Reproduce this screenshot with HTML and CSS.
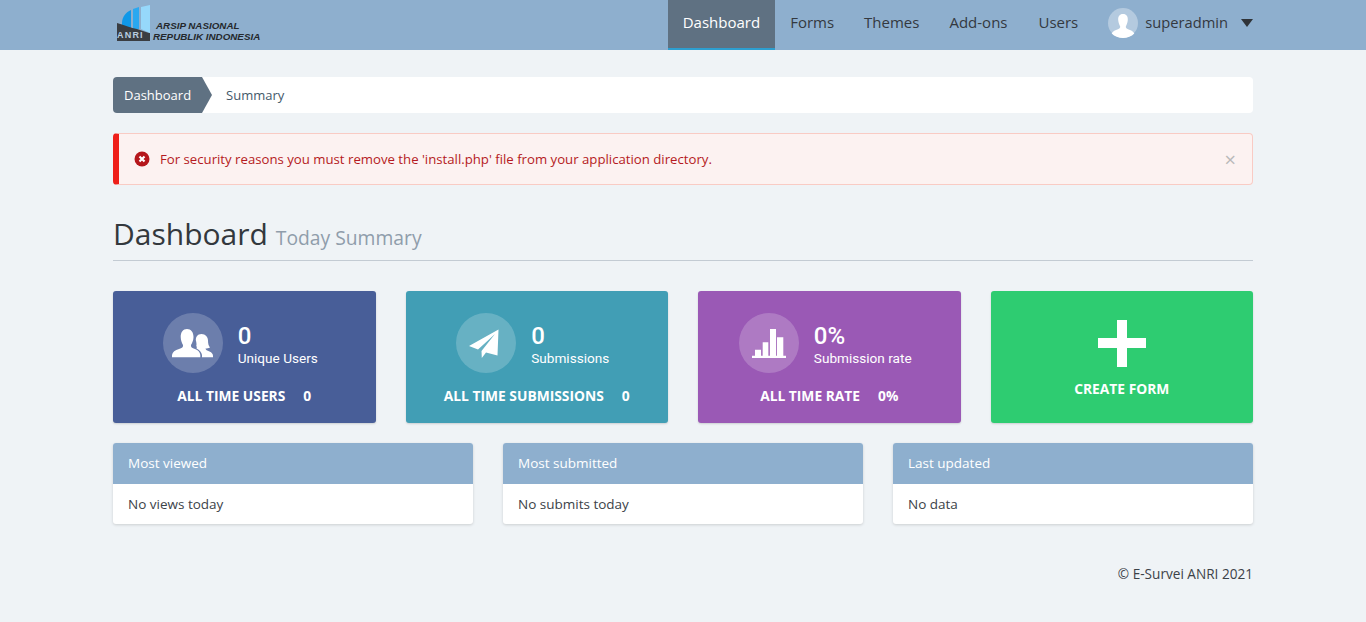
FILE: index.html
```html
<!DOCTYPE html>
<html lang="en">
<head>
    <meta charset="UTF-8">
    <meta name="viewport" content="width=device-width, initial-scale=1.0">
    <title>Dashboard</title>
    <link rel="stylesheet" href="styles.css">
</head>
<body>
    <header class="navbar">
        <div class="wrap navbar-inner">
            <a class="brand" href="#">
                <svg class="brand-mark" width="36" height="38" viewBox="0 0 36 38">
                    <path d="M5 19C5 13 9 8 14 6V25L5 21Z" fill="#1098e8"/>
                    <path d="M16 5L22 3V25L16 25Z" fill="#2aa8f0"/>
                    <path d="M24 3L33 1V29L24 25Z" fill="#96d8fb"/>
                    <path d="M0 19C8 21 14 24 20 25L32 29H33V37H0Z" fill="#3a3d42"/>
                </svg>
                <span class="brand-anri">ANRI</span>
                <span class="brand-text">
                    <span class="brand-line1">ARSIP NASIONAL</span>
                    <span>REPUBLIK INDONESIA</span>
                </span>
            </a>
            <nav class="nav">
                <a class="nav-item active" href="#">Dashboard</a>
                <a class="nav-item" href="#">Forms</a>
                <a class="nav-item" href="#">Themes</a>
                <a class="nav-item" href="#">Add-ons</a>
                <a class="nav-item nav-last" href="#">Users</a>
                <a class="nav-user" href="#">
                    <svg class="avatar" width="30" height="30" viewBox="0 0 30 30">
                        <circle cx="15" cy="15" r="15" fill="#b4cadf"/>
                        <path d="M15 6C18.500 6 20 8.500 19.800 12C19.600 15 18.500 17 17.800 18.500C17.500 20 19 21 22 22C24.500 23 26 24.500 26.300 25.500C23.500 28.300 19.500 30 15 30C10.500 30 6.500 28.300 3.700 25.500C4 24.500 5.500 23 8 22C11 21 12.500 20 12.200 18.500C11.500 17 10.400 15 10.200 12C10 8.500 11.500 6 15 6Z" fill="#fff"/>
                    </svg>
                    <span class="user-name">superadmin</span>
                    <span class="caret"></span>
                </a>
            </nav>
        </div>
    </header>

    <main class="wrap">
        <div class="breadcrumb">
            <a class="crumb-active" href="#">Dashboard</a>
            <span class="crumb">Summary</span>
        </div>

        <div class="alert">
            <svg class="alert-icon" width="16" height="16" viewBox="0 0 16 16">
                <circle cx="8" cy="8" r="7.500" fill="#b5171c"/>
                <path d="M5.500 5.500L10.500 10.500M10.500 5.500L5.500 10.500" stroke="#fff" stroke-width="2.200"/>
            </svg>
            <span class="alert-text">For security reasons you must remove the 'install.php' file from your application directory.</span>
            <span class="alert-close">×</span>
        </div>

        <div class="page-title">
            <h1>Dashboard</h1>
            <small>Today Summary</small>
        </div>

        <section class="stats">
            <div class="stat stat-blue">
                <div class="stat-top">
                    <span class="stat-icon">
                        <svg width="41" height="29" viewBox="0 0 41 29" fill="#fff">
                            <path d="M15 0C19 0 21.500 3 21.500 8C21.500 11.500 20 14 19 16C18.500 18 20 19 23 20C26 21.200 28 23 28.300 26V28.300H0V26C.5 23 3 21.200 7 20C10 19 11.500 18 11 16C10 14 8.700 11.500 8.700 8C8.700 3 11 0 15 0Z"/>
                            <path d="M29.500 5C33.500 5 36 8 36 11.500C36 14.500 36.500 16.500 38 18.500C36.500 19.300 35 19.500 33.500 19.500C33.800 21 35 21.500 37.500 22.500C39.800 23.500 41 25 41 27V28.300H30V26C29.500 23 27.500 21 24.500 19.500C25 18.500 24.800 17.500 24.300 17C25 15 24 12 23.800 11C23.800 8 25.500 5 29.500 5Z"/>
                        </svg>
                    </span>
                    <div class="stat-info">
                        <div class="stat-num">0</div>
                        <div class="stat-label">Unique Users</div>
                    </div>
                </div>
                <div class="stat-bottom"><span>ALL TIME USERS</span><span>0</span></div>
            </div>
            <div class="stat stat-teal">
                <div class="stat-top">
                    <span class="stat-icon">
                        <svg class="plane" width="30" height="29" viewBox="0 0 30 29" fill="#fff">
                            <path d="M29.500 .5L0 17L9 20.500L26 5L12.500 22L12.800 29L17 23.500L28.500 26.500Z"/>
                        </svg>
                    </span>
                    <div class="stat-info">
                        <div class="stat-num">0</div>
                        <div class="stat-label">Submissions</div>
                    </div>
                </div>
                <div class="stat-bottom"><span>ALL TIME SUBMISSIONS</span><span>0</span></div>
            </div>
            <div class="stat stat-purple">
                <div class="stat-top">
                    <span class="stat-icon">
                        <svg width="34" height="29" viewBox="0 0 34 29" fill="#fff">
                            <path d="M3 20.700H9V26.700H3ZM10.700 13.300H16.300V26.700H10.700ZM18 0H24V26.700H18ZM25 8.300H31.300V26.700H25ZM0 26.700H34V29H0Z"/>
                        </svg>
                    </span>
                    <div class="stat-info">
                        <div class="stat-num">0%</div>
                        <div class="stat-label">Submission rate</div>
                    </div>
                </div>
                <div class="stat-bottom"><span>ALL TIME RATE</span><span>0%</span></div>
            </div>
            <a class="stat stat-green" href="#">
                <svg width="48" height="47" viewBox="0 0 48 47" fill="#fff">
                    <path d="M19 0H29V18H48V28H29V47H19V28H0V18H19Z"/>
                </svg>
                <span class="create-label">CREATE FORM</span>
            </a>
        </section>

        <section class="panels">
            <div class="panel">
                <div class="panel-head">Most viewed</div>
                <div class="panel-body">No views today</div>
            </div>
            <div class="panel">
                <div class="panel-head">Most submitted</div>
                <div class="panel-body">No submits today</div>
            </div>
            <div class="panel">
                <div class="panel-head">Last updated</div>
                <div class="panel-body">No data</div>
            </div>
        </section>

        <footer class="footer">© E-Survei ANRI 2021</footer>
    </main>
</body>
</html>
```

FILE: styles.css
```css
* {
    box-sizing: border-box;
}

body {
    margin: 0;
    background-color: #eff3f6;
    color: #34383c;
    font-family: 'Open Sans', 'Noto Sans', sans-serif;
    font-size: 14px;
}

a {
    color: inherit;
    text-decoration: none;
}

.wrap {
    width: 1140px;
    margin: 0 auto;
}

.navbar {
    height: 50px;
    background-color: #8eafce;
}

.navbar-inner {
    display: flex;
    justify-content: space-between;
    height: 50px;
}

.brand {
    position: relative;
    display: flex;
    align-items: flex-end;
    width: 150px;
    padding: 0 0 8px 4px;
}

.brand-mark {
    position: absolute;
    left: 4px;
    top: 4px;
}

.brand-anri {
    position: absolute;
    left: 4px;
    top: 30px;
    width: 33px;
    color: #b9cde0;
    font-family: 'Liberation Sans', sans-serif;
    font-size: 9px;
    font-weight: 700;
    letter-spacing: 1.2px;
    line-height: 11px;
}

.brand-text {
    display: flex;
    flex-direction: column;
    margin-left: 36px;
    color: #24282c;
    font-family: 'Liberation Sans', sans-serif;
    font-size: 9.8px;
    font-style: italic;
    font-weight: 700;
    line-height: 11px;
    white-space: nowrap;
}

.brand-line1 {
    margin-left: 3px;
}

.nav {
    display: flex;
    align-items: stretch;
    font-size: 15px;
}

.nav-item {
    display: flex;
    align-items: center;
    padding: 0 15px 7px;
    color: #34393f;
}

.nav-item.active {
    background-color: #5f7182;
    border-bottom: 2px solid #2d9fd0;
    padding-bottom: 5px;
    color: #fff;
}

.nav-last {
    padding-left: 16px;
}

.nav-user {
    display: flex;
    align-items: center;
    margin-left: 15px;
    padding-bottom: 7px;
    color: #34393f;
}

.avatar {
    margin-right: 7px;
    margin-top: 2px;
}

.user-name {
    font-size: 14.7px;
}

.caret {
    width: 0;
    height: 0;
    margin-left: 13px;
    margin-top: 2px;
    border-top: 8px solid #2f3338;
    border-left: 6px solid transparent;
    border-right: 6px solid transparent;
}

.breadcrumb {
    display: flex;
    align-items: center;
    height: 36px;
    margin-top: 27px;
    background-color: #fff;
    border-radius: 4px;
    font-size: 13px;
}

.crumb-active {
    position: relative;
    display: flex;
    align-items: center;
    height: 36px;
    padding: 0 11px;
    background-color: #5f7182;
    border-radius: 4px 0 0 4px;
    color: #fff;
}

.crumb-active::after {
    content: "";
    position: absolute;
    left: 100%;
    top: 0;
    border-top: 18px solid transparent;
    border-bottom: 18px solid transparent;
    border-left: 10px solid #5f7182;
}

.crumb {
    margin-left: 24px;
    color: #44586a;
}

.alert {
    display: flex;
    align-items: center;
    height: 52px;
    margin-top: 20px;
    padding: 0 15px;
    background-color: #fcf2f1;
    border: 1px solid #f9cbc4;
    border-left: 6px solid #ee1f1a;
    border-radius: 4px;
    color: #b51a22;
    font-size: 13.2px;
}

.alert-icon {
    margin-right: 10px;
}

.alert-text {
    flex: 1;
}

.alert-close {
    margin-right: 1px;
    color: #b9b9b9;
    font-size: 20px;
}

.page-title {
    display: flex;
    align-items: baseline;
    height: 48px;
    margin-top: 28px;
    border-bottom: 1px solid #c3cbd3;
}

.page-title h1 {
    margin: 0;
    color: #33383d;
    font-size: 30px;
    font-weight: 400;
}

.page-title small {
    margin-left: 8px;
    color: #8f9dab;
    font-size: 19.3px;
}

.stats {
    display: grid;
    grid-template-columns: repeat(4, 1fr);
    gap: 30px;
    margin-top: 30px;
}

.stat {
    display: flex;
    flex-direction: column;
    align-items: center;
    height: 132px;
    border-radius: 3px;
    box-shadow: 0 1px 2px rgba(0, 0, 0, 0.15);
    color: #fff;
}

.stat-blue {
    background-color: #485e98;
}

.stat-teal {
    background-color: #419eb5;
}

.stat-purple {
    background-color: #9a59b5;
}

.stat-green {
    justify-content: center;
    padding-top: 4px;
    background-color: #2ecc71;
}

.stat-top {
    display: flex;
    align-items: center;
    gap: 15px;
    margin-top: 22px;
    padding-right: 8px;
}

.stat-icon {
    display: flex;
    align-items: center;
    justify-content: center;
    width: 60px;
    height: 60px;
    background-color: rgba(255, 255, 255, 0.2);
    border-radius: 50%;
}

.plane {
    margin-right: 4px;
}

.stat-info {
    padding-top: 2px;
    font-family: Roboto, sans-serif;
}

.stat-num {
    font-size: 24px;
    font-weight: 500;
    line-height: 28px;
}

.stat-label {
    font-size: 13.6px;
    line-height: 16px;
}

.stat-bottom {
    display: flex;
    gap: 18px;
    margin-top: 13px;
    font-size: 13.8px;
    font-weight: 700;
}

.create-label {
    margin-top: 12px;
    font-size: 13.8px;
    font-weight: 700;
}

.panels {
    display: grid;
    grid-template-columns: repeat(3, 1fr);
    gap: 30px;
    margin-top: 20px;
}

.panel {
    background-color: #fff;
    border-radius: 3px;
    box-shadow: 0 1px 3px rgba(0, 0, 0, 0.15);
    font-size: 13.5px;
}

.panel-head {
    display: flex;
    align-items: center;
    height: 41px;
    padding: 0 15px 2px;
    background-color: #8eafce;
    border-radius: 3px 3px 0 0;
    color: #fff;
}

.panel-body {
    display: flex;
    align-items: center;
    height: 40px;
    padding: 0 15px;
    color: #3c4248;
}

.footer {
    margin-top: 40px;
    color: #3c4248;
    font-size: 13.6px;
    text-align: right;
}
```
